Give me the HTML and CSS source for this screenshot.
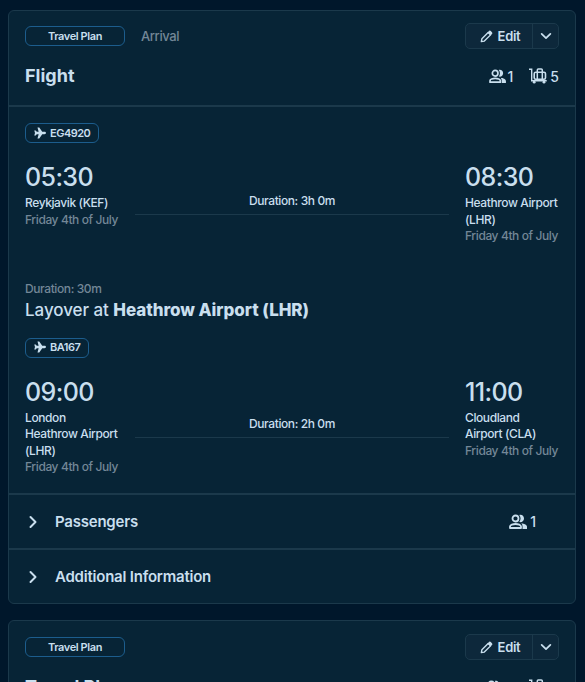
FILE: index.html
```
<!DOCTYPE html>
<html lang="en">
<head>
<meta charset="UTF-8">
<meta name="viewport" content="width=device-width, initial-scale=1.0">
<title>Travel Plan</title>
<link rel="stylesheet" href="styles.css">
</head>
<body>
<!-- Icons shared by the cards -->
<svg class="sprite" width="0" height="0">
    <symbol id="pencil" viewBox="0 0 24 24">
        <path fill="none" stroke="currentColor" stroke-width="2.6" stroke-linejoin="round" d="M2.500 21.500l1-5.500L15 4.500l4.500 4.500L8 20.500z"/>
        <path fill="currentColor" d="M14 4.500l3-3q1.500-1 3 .5l2 2q1.500 1.500.5 3l-3 3z"/>
    </symbol>
    <symbol id="chevron" viewBox="0 0 16 16">
        <path fill="none" stroke="currentColor" stroke-width="2" stroke-linecap="round" stroke-linejoin="round" d="M3 5.500l5 5 5-5"/>
    </symbol>
    <symbol id="people" viewBox="0 0 18 16">
        <circle cx="6.500" cy="4.500" r="3" fill="none" stroke="currentColor" stroke-width="1.800"/>
        <path fill="none" stroke="currentColor" stroke-width="1.800" stroke-linejoin="round" d="M1 14v-1.500c0-1.500 3-2.500 5.500-2.500s5.500 1 5.500 2.500V14z"/>
        <path fill="currentColor" d="M10.300 1c2.500-.7 4.700 1 4.700 3.500s-2.200 4.200-4.700 3.500c1.700-2 1.700-5 0-7zM12.300 9.200c2.800.3 5.700 1.500 5.700 3.600v2.200h-4.500v-2.500c0-1.300-.3-2.300-1.200-3.300z"/>
    </symbol>
    <symbol id="luggage" viewBox="0 0 18 16">
        <path fill="none" stroke="currentColor" stroke-width="1.400" d="M0 1.300h2.700v11.400h15"/>
        <rect x="5.200" y="4.300" width="11.300" height="7" rx="1.500" fill="none" stroke="currentColor" stroke-width="1.600"/>
        <path fill="none" stroke="currentColor" stroke-width="1.500" d="M8.300 11V2q0-1 1-1h3q1 0 1 1v9"/>
        <circle cx="5.200" cy="14.200" r="1.400" fill="currentColor"/>
        <circle cx="15" cy="14.200" r="1.400" fill="currentColor"/>
    </symbol>
    <symbol id="plane" viewBox="0 0 24 24">
        <path fill="currentColor" d="M24 12c0-1.300-1.400-2.300-3-2.300h-4.500L10.500 1H7l2.300 8.700H5.500L3.500 7H.5L2 12 .5 17h3l2-2.700h3.800L7 23h3.500l6-8.700H21c1.600 0 3-1 3-2.300z"/>
    </symbol>
</svg>

<div class="card">
    <div class="card-header">
        <div class="toolbar">
            <span class="tag">Travel Plan</span>
            <span class="type">Arrival</span>
            <div class="buttons">
                <button class="edit"><svg class="icon-pencil"><use href="#pencil"/></svg>Edit</button>
                <button class="more" aria-label="More"><svg class="icon-chevron"><use href="#chevron"/></svg></button>
            </div>
        </div>
        <div class="title-row">
            <h2>Flight</h2>
            <div class="counts">
                <span><svg class="icon-count"><use href="#people"/></svg>1</span>
                <span><svg class="icon-luggage"><use href="#luggage"/></svg>5</span>
            </div>
        </div>
    </div>

    <div class="card-body">
        <span class="flight-no"><svg class="icon-plane"><use href="#plane"/></svg>EG4920</span>
        <div class="flight">
            <div class="stop">
                <div class="time">05:30</div>
                <div class="place">Reykjavik (KEF)</div>
                <div class="date">Friday 4th of July</div>
            </div>
            <div class="duration">Duration: 3h 0m</div>
            <div class="stop">
                <div class="time">08:30</div>
                <div class="place">Heathrow Airport (LHR)</div>
                <div class="date">Friday 4th of July</div>
            </div>
        </div>

        <div class="layover">
            <div class="layover-time">Duration: 30m</div>
            <h3>Layover at <b>Heathrow Airport (LHR)</b></h3>
        </div>

        <span class="flight-no"><svg class="icon-plane"><use href="#plane"/></svg>BA167</span>
        <div class="flight">
            <div class="stop">
                <div class="time">09:00</div>
                <div class="place">London<br>Heathrow Airport (LHR)</div>
                <div class="date">Friday 4th of July</div>
            </div>
            <div class="duration">Duration: 2h 0m</div>
            <div class="stop">
                <div class="time">11:00</div>
                <div class="place">Cloudland Airport (CLA)</div>
                <div class="date">Friday 4th of July</div>
            </div>
        </div>
    </div>

    <div class="section">
        <svg class="icon-open"><use href="#chevron"/></svg>
        <h4>Passengers</h4>
        <span class="section-count"><svg class="icon-people"><use href="#people"/></svg>1</span>
    </div>
    <div class="section">
        <svg class="icon-open"><use href="#chevron"/></svg>
        <h4>Additional Information</h4>
    </div>
</div>

<div class="card">
    <div class="card-header">
        <div class="toolbar">
            <span class="tag">Travel Plan</span>
            <div class="buttons">
                <button class="edit"><svg class="icon-pencil"><use href="#pencil"/></svg>Edit</button>
                <button class="more" aria-label="More"><svg class="icon-chevron"><use href="#chevron"/></svg></button>
            </div>
        </div>
        <div class="title-row">
            <h2>Travel Plan</h2>
            <div class="counts">
                <span><svg class="icon-count"><use href="#people"/></svg>5</span>
                <span><svg class="icon-luggage"><use href="#luggage"/></svg>4</span>
            </div>
        </div>
    </div>
</div>
</body>
</html>
```
FILE: styles.css
```
* {
    box-sizing: border-box;
}
html {
    height: 100%;
    overflow: hidden;
}
body {
    height: 100%;
    margin: 0;
    padding: 10px 9px 0 8px;
    overflow: hidden;
    background-color: #00172b;
    color: #c9dfee;
    font-family: Inter, sans-serif;
    font-size: 12px;
    font-weight: 500;
    letter-spacing: -0.4px;
}
h2, h3, h4 {
    margin: 0;
}
.sprite {
    display: block;
}
.card {
    margin-bottom: 16px;
    background-color: #072436;
    border: 1px solid #1b394b;
    border-radius: 6px;
}
.card-header {
    height: 94px;
    padding: 12px 16px 0;
}
.card + .card .card-header {
    padding-top: 13px;
}
.toolbar {
    display: flex;
    align-items: center;
    height: 26px;
}
.tag {
    width: 100px;
    height: 20px;
    border: 1px solid #1c5d8d;
    border-radius: 6px;
    font-size: 11px;
    font-weight: 600;
    line-height: 18px;
    text-align: center;
}
.type {
    margin-left: 16px;
    color: #738797;
    font-size: 13px;
}
.buttons {
    display: flex;
    height: 26px;
    margin-left: auto;
    background-color: #0d283b;
    border: 1px solid #1b394b;
    border-radius: 5px;
}
button {
    display: flex;
    align-items: center;
    justify-content: center;
    padding: 0;
    background: none;
    border: none;
    color: inherit;
    font: 600 13px Inter, sans-serif;
    letter-spacing: -0.3px;
}
.edit {
    width: 67px;
    padding-left: 2px;
    gap: 5px;
    border-right: 1px solid #1b394b;
}
.more {
    width: 25px;
}
.icon-pencil {
    width: 13px;
    height: 13px;
}
.icon-chevron {
    width: 14px;
    height: 14px;
}
.title-row {
    display: flex;
    align-items: center;
    justify-content: space-between;
    height: 24px;
    margin-top: 15px;
}
h2 {
    padding-bottom: 1px;
    font-size: 18px;
    font-weight: 700;
    letter-spacing: 0;
}
.counts {
    display: flex;
    gap: 16px;
    font-size: 14px;
    letter-spacing: 0;
}
.counts span {
    display: flex;
    align-items: center;
    gap: 3px;
}
.icon-count {
    width: 17px;
    height: 15px;
    margin-right: -1px;
}
.icon-luggage {
    width: 18px;
    height: 16px;
}
.card-body {
    height: 388px;
    padding: 16px 16px 0;
    border-top: 2px solid #1b394b;
}
.flight-no {
    display: flex;
    align-items: center;
    gap: 4px;
    width: fit-content;
    height: 20px;
    padding: 0 8px 1px;
    border: 1px solid #1c5d8d;
    border-radius: 6px;
    font-size: 11px;
    font-weight: 600;
    letter-spacing: -0.5px;
}
.icon-plane {
    width: 12px;
    height: 12px;
}
.flight {
    display: grid;
    grid-template-columns: 94px 1fr 94px;
    gap: 16px;
    margin-top: 17px;
}
.time {
    height: 34px;
    font-size: 25px;
    line-height: 34px;
    letter-spacing: -0.6px;
}
.place, .date {
    line-height: 16.5px;
}
.place {
    padding-top: 1px;
    font-weight: 550;
}
.date, .layover-time {
    color: #738797;
    white-space: nowrap;
}
.duration {
    align-self: center;
    height: 22px;
    margin-top: 4px;
    border-bottom: 1px solid #1b394b;
    font-weight: 550;
    line-height: 16px;
    text-align: center;
}
.layover {
    margin-top: 36px;
    margin-bottom: 15px;
}
.layover-time {
    line-height: 16px;
}
h3 {
    padding-top: 1px;
    font-size: 17px;
    font-weight: 500;
    line-height: 25px;
    letter-spacing: -0.06px;
}
h3 b {
    font-weight: 800;
}
.section {
    display: flex;
    align-items: center;
    height: 55px;
    padding: 0 39px 0 16px;
    border-top: 2px solid #1b394b;
}
.icon-open {
    width: 16px;
    height: 16px;
    margin-right: 14px;
    transform: rotate(-90deg);
}
h4 {
    font-size: 15px;
    font-weight: 600;
    letter-spacing: -0.22px;
}
.section-count {
    display: flex;
    align-items: center;
    gap: 3px;
    margin-left: auto;
    font-size: 14px;
    letter-spacing: 0;
}
.icon-people {
    width: 18px;
    height: 16px;
}
```
